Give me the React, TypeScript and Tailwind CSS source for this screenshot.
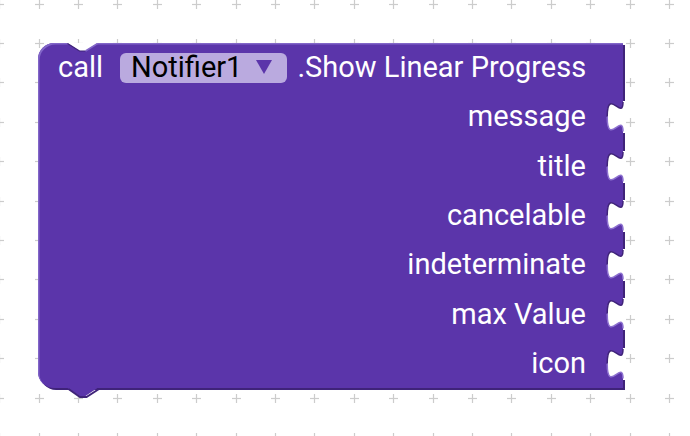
import React from "react";

// grid crosses of the blockly workspace
function Grid() {
  const xs: number[] = [];
  const ys: number[] = [];
  for (let k = -1; k < 18; k++) xs.push(Math.round(38.5 + 39.4 * k) + 0.5);
  for (let k = -1; k < 11; k++) ys.push(Math.round(43 + 39.4 * k) + 0.5);
  return (
    <svg className="absolute inset-0" width={690} height={436}>
      {xs.map((x) =>
        ys.map((y) => (
          <g key={`${x}-${y}`} stroke="#cccccc" strokeWidth={1.2}>
            <line x1={x - 4.5} y1={y} x2={x + 4.5} y2={y} />
            <line x1={x} y1={y - 4.5} x2={x} y2={y + 4.5} />
          </g>
        ))
      )}
    </svg>
  );
}

// C-shaped socket cut into the right edge of the block
function Socket() {
  return (
    <svg
      className="absolute right-[-3px] top-[10px] overflow-visible"
      width={21}
      height={30}
      viewBox="0 0 21 30"
    >
      <path
        d="M18,-1 L18,0 C18,19.7 2.2,-15.8 2.2,14.8 C2.2,45.4 18,9.9 18,29.6 L18,31 L21,31 L21,-1 Z"
        fill="#ffffff"
      />
      <path
        d="M18,0 C18,19.7 2.2,-15.8 2.2,14.8"
        fill="none"
        stroke="#3f2379"
        strokeWidth={1.5}
      />
      <path
        d="M2.2,14.8 C2.2,45.4 18,9.9 18,29.6"
        fill="none"
        stroke="#8c70cf"
        strokeWidth={1.5}
      />
    </svg>
  );
}

function InputRow({ label }: { label: string }) {
  return (
    <div className="relative h-[49.3px] flex items-center justify-end pr-[37px]">
      <span className="text-white">{label}</span>
      <Socket />
    </div>
  );
}

export default function App() {
  const inputs = ["message", "title", "cancelable", "indeterminate", "max Value", "icon"];
  return (
    <div
      className="relative w-[690px] h-[436px] bg-white overflow-hidden"
      style={{ fontFamily: "Roboto, 'Noto Sans', sans-serif" }}
    >
      <Grid />

      {/* the block sits on the workspace canvas */}
      <div className="absolute left-[38px] top-[43px] w-[585px]">
        <div className="relative rounded-l-[16px] bg-[#5b35aa] shadow-[2px_2px_0_#3f2379,inset_1.5px_1.5px_0_#8266c8] text-[29px] leading-none">
          {/* previous-statement notch */}
          <svg className="absolute left-[29px] top-0" width={32} height={9} viewBox="0 0 32 9">
            <path d="M0,-1 L0.5,0 L12.5,8 L18.5,8 L30.5,0 L31,-1 Z" fill="#ffffff" />
            <path d="M0.5,0.5 L12.5,8 L18.5,8" fill="none" stroke="#3f2379" strokeWidth={1.2} />
            <path d="M18.5,8 L30.5,0.5" fill="none" stroke="#8266c8" strokeWidth={1.5} />
          </svg>

          <div className="h-[49.3px] flex items-center pl-[20px]">
            <span className="text-white">call</span>
            <div className="ml-[17px] h-[30px] flex items-center rounded-[6px] bg-[#baaadf] pl-[11px] pr-[15px]">
              <span className="text-black">Notifier1</span>
              <svg className="ml-[14px]" width={16} height={15} viewBox="0 0 16 15">
                <path d="M0,0 L16,0 L8,14 Z" fill="#5b35aa" />
              </svg>
            </div>
            <span className="ml-[10px] text-white">.Show Linear Progress</span>
          </div>

          {inputs.map((l) => (
            <InputRow key={l} label={l} />
          ))}

          {/* next-statement tab */}
          <svg
            className="absolute left-[29px] bottom-[-8px] overflow-visible"
            width={32}
            height={8}
            viewBox="0 0 32 8"
          >
            <path d="M0,-1 L0.5,0 L12.5,8 L18.5,8 L30.5,0 L31,-1 Z" fill="#5b35aa" />
            <path d="M1.5,1 L13,9 L19.5,9 L32,1" fill="none" stroke="#3f2379" strokeWidth={2} />
          </svg>
        </div>
      </div>
    </div>
  );
}
